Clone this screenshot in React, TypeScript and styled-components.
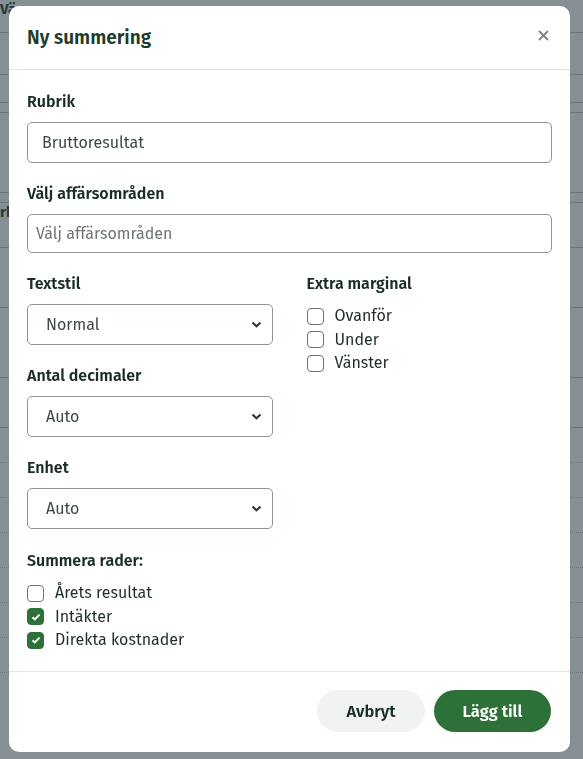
import React from "react";
import styled, { createGlobalStyle } from "styled-components";

const GlobalStyle = createGlobalStyle`
  html, body {
    margin: 0;
    padding: 0;
    height: 100%;
  }
  body {
    background: #868f94;
    font-family: "Fira Sans", Lato, "Open Sans", sans-serif;
    color: #1b2e24;
  }
  * {
    box-sizing: border-box;
  }
`;

// page behind the overlay, dimmed
const Page = styled.div`
  height: 759px;
  overflow: hidden;
  background: #868f94;
  display: flex;
  flex-direction: column;
`;
interface IRowProps {
  h: number;
  dashed?: boolean;
}
const BgRow = styled.div<IRowProps>`
  height: ${(p) => p.h}px;
  flex-shrink: 0;
  border-bottom: 1px ${(p) => (p.dashed ? "dotted" : "solid")} #6a7378;
  font-size: 15px;
  font-weight: 700;
  color: #2c3a34;
  line-height: 18px;
`;

const Overlay = styled.div`
  position: fixed;
  inset: 0;
  display: flex;
  justify-content: center;
  padding-top: 6px;
`;
const Modal = styled.div`
  width: 561px;
  height: 746px;
  margin-right: 4px;
  background: #fff;
  border-radius: 10px;
  display: flex;
  flex-direction: column;
`;
const Header = styled.div`
  height: 64px;
  flex-shrink: 0;
  display: flex;
  align-items: center;
  justify-content: space-between;
  padding: 0 20px 0 18px;
  border-bottom: 1px solid #e2e5e4;
  h2 {
    margin: 0;
    font-size: 19px;
    font-weight: 600;
    color: #1e3b2b;
  }
`;
const Close = styled.button`
  border: 0;
  background: none;
  padding: 0;
  width: 14px;
  height: 14px;
  display: flex;
  align-items: center;
  justify-content: center;
  margin-top: -4px;
  cursor: pointer;
`;
const Body = styled.div`
  flex: 1;
  padding: 22px 18px 0;
  display: flex;
  flex-direction: column;
`;
interface IFieldProps {
  gap?: number;
}
const Field = styled.div<IFieldProps>`
  display: flex;
  flex-direction: column;
  margin-bottom: ${(p) => p.gap ?? 21}px;
`;
const Label = styled.label`
  font-size: 16px;
  font-weight: 600;
  line-height: 20px;
  color: #1b2e24;
  margin-bottom: 10px;
`;
interface IInputProps {
  h: number;
  pad: number;
}
const Input = styled.input<IInputProps>`
  height: ${(p) => p.h}px;
  border: 1px solid #8c9591;
  border-radius: 5px;
  padding: 0 ${(p) => p.pad}px;
  font-family: inherit;
  font-size: 16px;
  color: #3b4843;
  outline: none;
  &::placeholder {
    color: #6c7672;
  }
`;
const Columns = styled.div`
  display: grid;
  grid-template-columns: 1fr 1fr;
  column-gap: 34px;
`;
const Col = styled.div`
  display: flex;
  flex-direction: column;
`;
const SelectBox = styled.div`
  height: 41px;
  border: 1px solid #8c9591;
  border-radius: 5px;
  padding: 0 10px 0 18px;
  display: flex;
  align-items: center;
  justify-content: space-between;
  font-size: 16px;
  color: #3b4843;
`;
const CheckList = styled.div`
  display: flex;
  flex-direction: column;
  gap: 3.5px;
  margin-top: 2px;
`;
const CheckRow = styled.label`
  display: flex;
  align-items: center;
  gap: 11px;
  font-size: 16px;
  line-height: 20px;
  color: #1f2f27;
`;
interface IBoxProps {
  checked?: boolean;
}
const Box = styled.span<IBoxProps>`
  width: 17px;
  height: 17px;
  border-radius: 4px;
  border: 1px solid ${(p) => (p.checked ? "#2e7138" : "#6c7672")};
  background: ${(p) => (p.checked ? "#2e7138" : "#fff")};
  display: flex;
  align-items: center;
  justify-content: center;
  flex-shrink: 0;
`;
const Footer = styled.div`
  height: 81px;
  flex-shrink: 0;
  border-top: 1px solid #e2e5e4;
  display: flex;
  align-items: center;
  justify-content: flex-end;
  gap: 9px;
  padding: 0 19px 2px;
`;
interface IBtnProps {
  primary?: boolean;
}
const Button = styled.button<IBtnProps>`
  height: 42px;
  border: 0;
  border-radius: 21px;
  padding: 0 24px;
  min-width: ${(p) => (p.primary ? 117 : 108)}px;
  font-family: inherit;
  font-size: 16.5px;
  font-weight: 600;
  background: ${(p) => (p.primary ? "#2e7138" : "#f1f3f2")};
  color: ${(p) => (p.primary ? "#fff" : "#1b2e24")};
  cursor: pointer;
`;

const Chevron = () => (
  <svg width="11" height="7" viewBox="0 0 11 7">
    <path d="M1.5 1.5l4 3.8 4-3.8" stroke="#2b3531" strokeWidth="2" fill="none" />
  </svg>
);

const Tick = () => (
  <svg width="10" height="8" viewBox="0 0 10 8">
    <path d="M1.5 4.2l2.3 2.2L8.5 1.6" stroke="#fff" strokeWidth="2" fill="none" />
  </svg>
);

const Select = ({ value }: { value: string }) => (
  <SelectBox>
    {value}
    <Chevron />
  </SelectBox>
);

const Check = ({ label, checked }: { label: string; checked?: boolean }) => (
  <CheckRow>
    <Box checked={checked}>{checked && <Tick />}</Box>
    {label}
  </CheckRow>
);

const bgRows = [
  { h: 33, text: "Vä" },
  { h: 42 },
  { h: 28 },
  { h: 10 },
  { h: 80 },
  { h: 10 },
  { h: 45, text: "rk" },
  { h: 60 },
  { h: 70 },
  { h: 50 },
  { h: 35, dashed: true },
  { h: 35, dashed: true },
  { h: 35, dashed: true },
  { h: 35, dashed: true },
  { h: 35, dashed: true },
  { h: 35, dashed: true },
  { h: 35, dashed: true },
];

const App = () => {
  return (
    <>
      <GlobalStyle />
      <Page>
        {bgRows.map((r, i) => (
          <BgRow key={i} h={r.h} dashed={r.dashed}>
            {r.text}
          </BgRow>
        ))}
      </Page>
      <Overlay>
        <Modal>
          <Header>
            <h2>Ny summering</h2>
            <Close aria-label="Stäng">
              <svg width="11" height="11" viewBox="0 0 11 11">
                <path d="M1 1l9 9M10 1l-9 9" stroke="#7b8682" strokeWidth="1.8" />
              </svg>
            </Close>
          </Header>
          <Body>
            <Field>
              <Label>Rubrik</Label>
              <Input h={41} pad={14} defaultValue="Bruttoresultat" />
            </Field>
            <Field>
              <Label>Välj affärsområden</Label>
              <Input h={39} pad={8} placeholder="Välj affärsområden" />
            </Field>
            <Columns>
              <Col>
                <Field>
                  <Label>Textstil</Label>
                  <Select value="Normal" />
                </Field>
                <Field>
                  <Label>Antal decimaler</Label>
                  <Select value="Auto" />
                </Field>
                <Field gap={22}>
                  <Label>Enhet</Label>
                  <Select value="Auto" />
                </Field>
              </Col>
              <Col>
                <Field>
                  <Label>Extra marginal</Label>
                  <CheckList>
                    <Check label="Ovanför" />
                    <Check label="Under" />
                    <Check label="Vänster" />
                  </CheckList>
                </Field>
              </Col>
            </Columns>
            <Field>
              <Label>Summera rader:</Label>
              <CheckList>
                <Check label="Årets resultat" />
                <Check label="Intäkter" checked />
                <Check label="Direkta kostnader" checked />
              </CheckList>
            </Field>
          </Body>
          <Footer>
            <Button>Avbryt</Button>
            <Button primary>Lägg till</Button>
          </Footer>
        </Modal>
      </Overlay>
    </>
  );
};

export default App;
